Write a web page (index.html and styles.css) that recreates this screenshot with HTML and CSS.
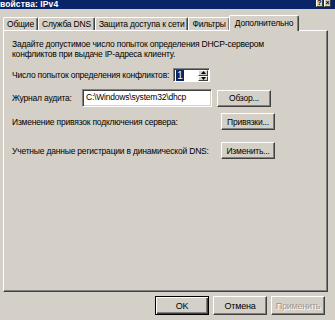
FILE: index.html
```html
<!DOCTYPE html>
<html>
<head>
<meta charset="utf-8">
<link rel="stylesheet" href="styles.css">
</head>
<body>
<div class="window">
  <div class="titlebar">
    <span class="title">войства: IPv4</span>
    <div class="tbtns">
      <span class="tbtn">?</span>
      <span class="tbtn">×</span>
    </div>
  </div>
  <div class="tabs">
    <div class="tab">Общие</div>
    <div class="tab">Служба DNS</div>
    <div class="tab">Защита доступа к сети</div>
    <div class="tab">Фильтры</div>
    <div class="tab active">Дополнительно</div>
  </div>
  <div class="panel">
    <p class="desc">Задайте допустимое число попыток определения DHCP-сервером<br>конфликтов при выдаче IP-адреса клиенту.</p>
    <div class="row r-spin">
      <span class="label">Число попыток определения конфликтов:</span>
      <div class="spin">
        <div class="spin-field"><span class="sel">1</span></div>
        <div class="spin-btns">
          <span class="sbtn"><svg width="5" height="3" viewBox="0 0 5 3"><path d="M2.5 0L5 3H0z" fill="#000"/></svg></span>
          <span class="sbtn"><svg width="5" height="3" viewBox="0 0 5 3"><path d="M0 0h5L2.5 3z" fill="#000"/></svg></span>
        </div>
      </div>
    </div>
    <div class="row r-log">
      <span class="label fixed">Журнал аудита:</span>
      <div class="field">C:\Windows\system32\dhcp</div>
      <button class="btn">Обзор...</button>
    </div>
    <div class="row r-bind">
      <span class="label grow">Изменение привязок подключения сервера:</span>
      <button class="btn">Привязки...</button>
    </div>
    <div class="row r-dns">
      <span class="label grow">Учетные данные регистрации в динамической DNS:</span>
      <button class="btn">Изменить...</button>
    </div>
  </div>
  <div class="footer">
    <button class="btn big default">OK</button>
    <button class="btn big">Отмена</button>
    <button class="btn big disabled">Применить</button>
  </div>
</div>
</body>
</html>
```
FILE: styles.css
```css
* { box-sizing: border-box; }
html, body { margin: 0; padding: 0; }
body {
  font-family: "Liberation Sans", Arial, sans-serif;
  font-size: 8.5px;
  letter-spacing: -0.2px;
  color: #000;
  background: #d4d0c8;
}
.window {
  width: 335px;
  height: 320px;
  background: #d4d0c8;
  overflow: hidden;
  display: flex;
  flex-direction: column;
}
.titlebar {
  height: 9px;
  background: #0a246a;
  display: flex;
  justify-content: space-between;
  align-items: flex-start;
  overflow: hidden;
  flex: none;
}
.title {
  color: #fff;
  font-weight: bold;
  font-size: 8.5px;
  line-height: 9px;
  letter-spacing: 0.1px;
}
.tbtns {
  display: flex;
  gap: 1px;
  margin-right: 4px;
  margin-top: -2px;
}
.tbtn {
  width: 7px;
  height: 9px;
  background: #d4d0c8;
  border: 1px solid;
  border-color: #fff #404040 #404040 #fff;
  font-size: 7px;
  line-height: 8px;
  font-weight: bold;
  text-align: center;
  color: #000;
  letter-spacing: 0;
}
.tabs {
  display: flex;
  align-items: flex-end;
  height: 21px;
  padding-left: 3px;
  flex: none;
}
.tab {
  height: 13px;
  padding: 0 3px;
  line-height: 12px;
  border-top: 1px solid #fff;
  border-left: 1px solid #fff;
  border-right: 1px solid #404040;
  border-radius: 2px 2px 0 0;
  box-shadow: inset -1px 0 #808080;
  white-space: nowrap;
}
.tab.active {
  height: 16px;
  margin: 0 -2px -1px -1px;
  padding: 0 5px;
  line-height: 14px;
  background: #d4d0c8;
  position: relative;
  z-index: 1;
}
.panel {
  width: 325px;
  height: 262px;
  margin-left: 3px;
  border: 1px solid;
  border-color: #fff #404040 #404040 #fff;
  box-shadow: inset -1px -1px #808080;
  padding: 9px 8px 0 8px;
  flex: none;
}
.desc {
  margin: 0;
  line-height: 9.5px;
}
.row {
  display: flex;
  align-items: center;
  width: 263px;
}
.r-spin { margin-top: 9px; gap: 4px; }
.r-log { margin-top: 7px; }
.r-bind { margin-top: 6px; }
.r-dns { margin-top: 12px; }
.label { white-space: nowrap; }
.label.fixed { width: 70px; flex: none; }
.label.grow { flex: 1; }
.spin {
  display: flex;
  width: 37px;
  height: 14px;
  border: 1px solid;
  border-color: #808080 #fff #fff #808080;
  box-shadow: inset 1px 1px #404040;
  background: #fff;
  padding: 1px 1px 0 2px;
}
.spin-field { flex: 1; font-size: 10px; line-height: 11px; }
.sel { background: #0a246a; color: #fff; padding: 0 1px; }
.spin-btns { display: flex; flex-direction: column; width: 10px; }
.sbtn {
  flex: 1;
  background: #d4d0c8;
  border: 1px solid;
  border-color: #fff #404040 #404040 #fff;
  display: flex;
  align-items: center;
  justify-content: center;
}
.sbtn svg { display: block; }
.field {
  width: 130px;
  height: 18px;
  background: #fff;
  border: 1px solid;
  border-color: #808080 #fff #fff #808080;
  box-shadow: inset 1px 1px #404040, inset -1px -1px #d4d0c8;
  padding: 0 3px;
  line-height: 15px;
  white-space: nowrap;
  overflow: hidden;
}
.r-log .btn { margin-left: 5px; }
.btn {
  font-family: inherit;
  font-size: 8.5px;
  letter-spacing: -0.2px;
  color: #000;
  width: 54px;
  height: 17px;
  padding: 0;
  background: #d4d0c8;
  border: 1px solid;
  border-color: #fff #404040 #404040 #fff;
  box-shadow: inset -1px -1px #808080;
  border-radius: 0;
  flex: none;
}
.footer {
  display: flex;
  justify-content: flex-end;
  gap: 4px;
  padding-right: 10px;
  margin-top: 4px;
}
.btn.big { height: 19px; font-size: 9px; }
.btn.default {
  border: 1px solid #000;
  box-shadow: inset 1px 1px #fff, inset -1px -1px #404040, inset -2px -2px #808080;
}
.btn.disabled {
  color: #9a978f;
  text-shadow: 1px 1px #fff;
}
```
